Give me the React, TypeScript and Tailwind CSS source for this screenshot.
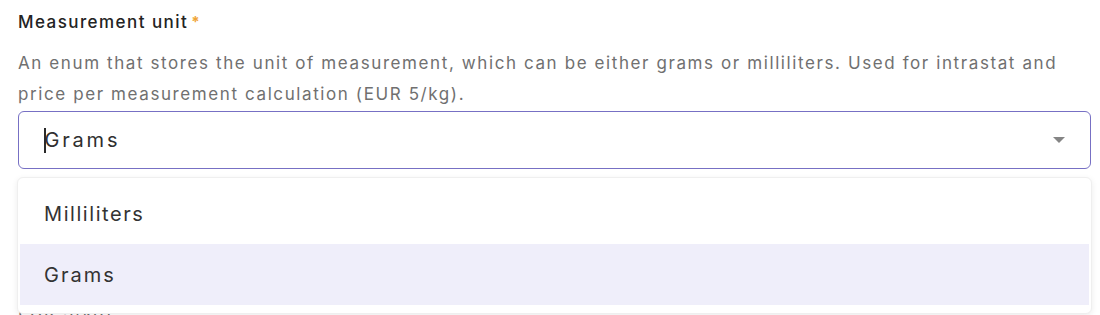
export default function App() {
  return (
    <main className="relative h-[315px] w-[1100px] overflow-hidden bg-white pl-[18px] pr-[9px] pt-[10px] font-['Inter',sans-serif] tracking-[0.1em]">
      <label className="flex items-start text-[17px] font-medium leading-6 tracking-[0.085em] text-[#232323]">
        Measurement unit
        <span className="ml-[3px] mt-[4px] text-[15px] font-bold leading-4 text-[#f0a537]">*</span>
      </label>
      <p className="mt-[14px] text-[17px] leading-[31px] tracking-[0.094em] text-[#707070]">
        An enum that stores the unit of measurement, which can be either grams or milliliters. Used for intrastat and
        price per measurement calculation (EUR 5/kg).
      </p>
      <div className="relative mt-[1px]">
        <div className="flex h-[58px] items-center rounded-md border-[1.5px] border-[#7770c4] bg-white pl-[25px] pr-[24px]">
          <span className="mr-[-1px] h-[25px] w-[1.5px] bg-[#2a2a2a]" />
          <span className="text-[20px] tracking-[0.14em] text-[#2f2f2f]">Grams</span>
          <svg className="ml-auto" width="14" height="8" viewBox="0 0 14 8">
            <path d="M1 1 L13 1 L7 7 Z" fill="#858585" />
          </svg>
        </div>
        <p className="mt-[131px] text-[17px] leading-6 text-[#707070]">EUR 5/kg).</p>
        <ul className="absolute left-[-1px] right-[-1px] top-[66px] rounded-md border border-[#efefef] bg-white pb-[8px] pt-[5px] shadow-[0_2px_6px_rgba(0,0,0,0.08)]">
          <li className="mx-[2px] flex h-[61px] items-center pl-[24px] text-[20px] tracking-[0.078em] text-[#333]">Milliliters</li>
          <li className="mx-[2px] flex h-[61px] items-center bg-[#efeefa] pl-[24px] text-[20px] tracking-[0.1em] text-[#333]">Grams</li>
        </ul>
      </div>
    </main>
  );
}
